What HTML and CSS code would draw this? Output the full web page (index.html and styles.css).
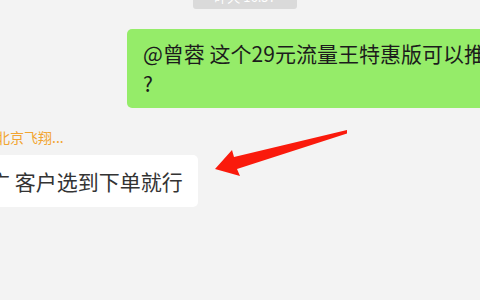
FILE: index.html
```html
<!DOCTYPE html>
<html lang="zh-CN">
<head>
  <meta charset="UTF-8" />
  <title>聊天记录</title>
  <link rel="stylesheet" href="styles.css">
</head>
<body>
  <div class="chat">
    <div class="time-row">
      <span class="time">昨天 16:57</span>
    </div>

    <div class="msg msg-self">
      <div class="bubble bubble-green">@曾蓉 这个29元流量王特惠版可以推广吗<br>?</div>
    </div>

    <div class="msg msg-other">
      <div class="name">北京飞翔...</div>
      <div class="bubble bubble-white">推广 客户选到下单就行</div>
    </div>

    <!-- annotation arrow drawn on top of the screenshot -->
    <svg class="arrow" width="480" height="300" viewBox="0 0 480 300">
      <polygon points="347,144 234,171 232,164 215,183 240,190 237,183 347,147.5" fill="#fa1a0c"/>
    </svg>
  </div>
</body>
</html>
```

FILE: styles.css
```css
html, body { margin: 0; padding: 0; }
body {
  width: 480px;
  height: 300px;
  overflow: hidden;
  background: #f3f3f3;
  font-family: "Noto Sans CJK SC", "Microsoft YaHei", sans-serif;
}
.chat { position: relative; height: 300px; }

.time-row { display: flex; justify-content: center; margin-top: -14px; padding-left: 10px; }
.time {
  height: 23px;
  line-height: 22px;
  padding: 0 21px;
  background: #dadada;
  color: #fff;
  font-size: 13px;
  border-radius: 3px;
}

.msg { display: flex; flex-direction: column; }
.msg-self { margin-top: 20px; padding-left: 127px; }
.msg-other { margin-top: 20px; align-items: flex-start; }

.bubble {
  font-size: 21px;
  line-height: 30px;
  white-space: nowrap;
  border-radius: 5px;
}
.bubble-green {
  width: 440px;
  padding: 9px 16px 10px;
  background: #95ec69;
  color: #1c1c1c;
}
.name {
  margin-left: -4px;
  font-size: 14px;
  line-height: 18px;
  color: #f2a531;
}
.bubble-white {
  margin-top: 9px;
  margin-left: -48px;
  padding: 11px 15px 11px 16px;
  background: #fff;
  color: #333;
}

.arrow { position: absolute; left: 0; top: 0; pointer-events: none; }
```
